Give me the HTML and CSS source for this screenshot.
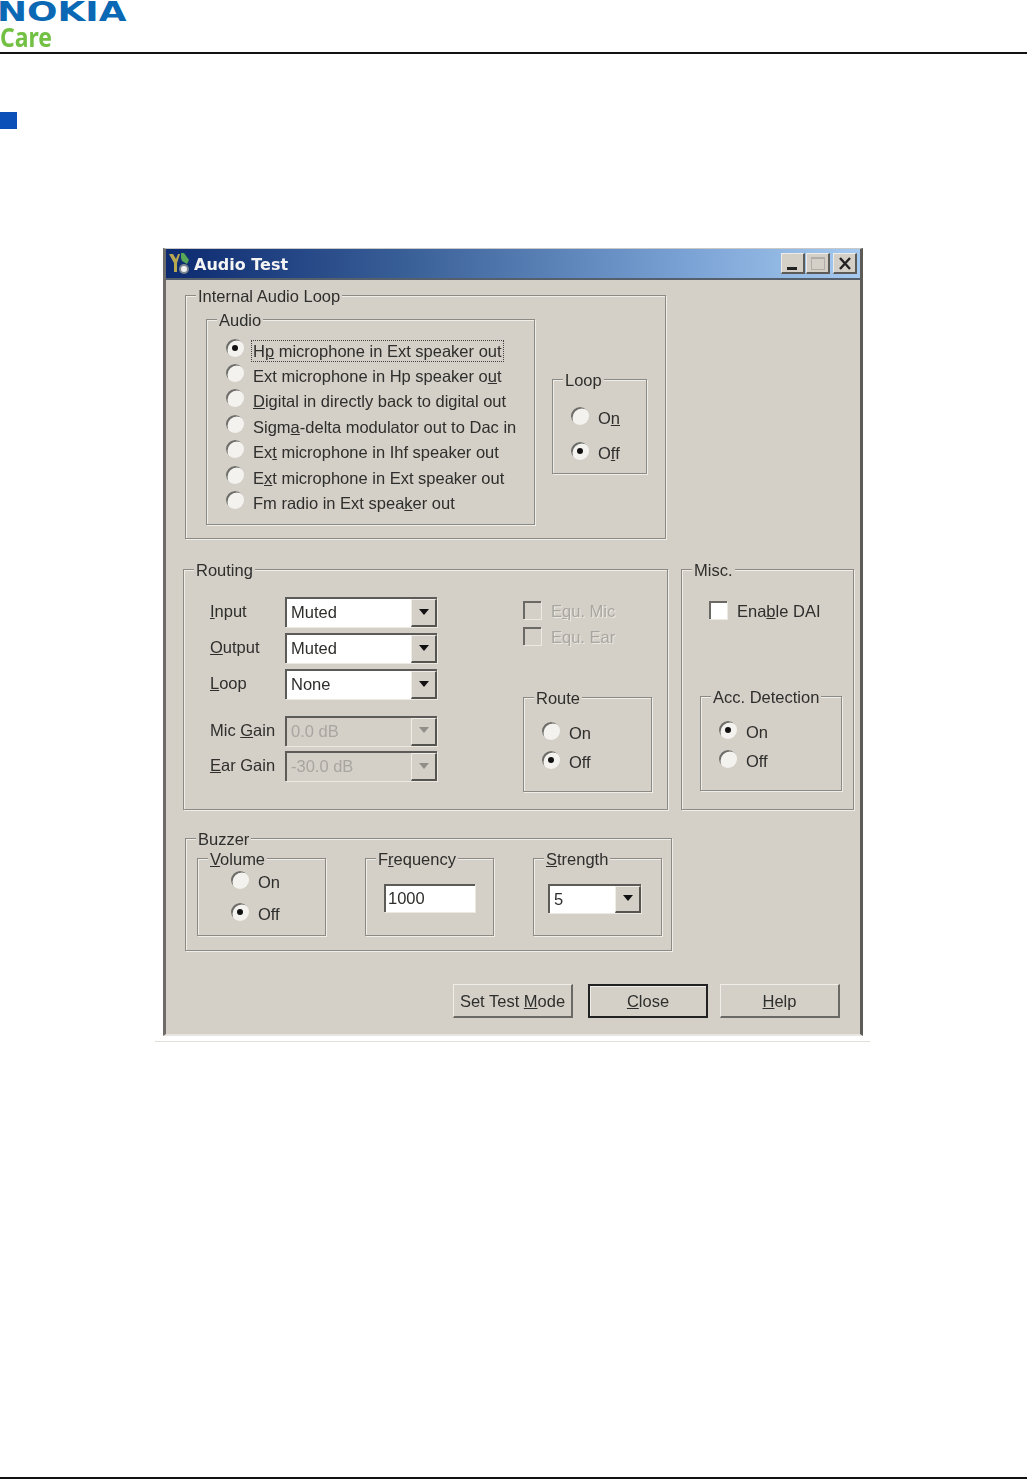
FILE: index.html
```html
<!DOCTYPE html>
<html lang="en">
<head>
<meta charset="utf-8">
<title>Audio Test</title>
<link rel="stylesheet" href="styles.css">
</head>
<body>
<header class="page-header">
  <div class="logo-nokia">NOKIA</div>
  <div class="logo-care">Care</div>
</header>
<div class="bullet"></div>
<figure class="figure">
  <div class="window">
    <div class="titlebar">
      <svg class="app-icon" width="23" height="23" viewBox="0 0 23 23">
        <path d="M1 2 L5 2 L8 7 L10 2 L12 2 L9 11 L9 20 L6 20 L6 11Z" fill="#b8a850"/>
        <path d="M13 1 L16 1 L21 8 L19 12 L14 9 L13 6Z" fill="#58a858"/>
        <circle cx="16" cy="17" r="5" fill="#7d8790"/>
        <circle cx="16" cy="17" r="3" fill="#f2f2f2"/>
      </svg>
      <span class="title-text">Audio Test</span>
      <div class="caption-buttons">
        <div class="cap-btn cap-min"><span class="min-glyph"></span></div>
        <div class="cap-btn cap-max"><span class="max-glyph"></span></div>
        <div class="cap-btn cap-close">
          <svg width="14" height="13" viewBox="0 0 14 13"><path d="M2 1 L12 12 M12 1 L2 12" stroke="#222" stroke-width="2.4"/></svg>
        </div>
      </div>
    </div>
    <div class="client">
      <section class="group g-internal">
        <span class="legend">Internal Audio Loop</span>
        <section class="group g-audio">
          <span class="legend">Audio</span>
          <div class="radio-row"><span class="radio checked"></span><span class="focus-label">H<u>p</u> microphone in Ext speaker out</span></div>
          <div class="radio-row"><span class="radio"></span><span>Ext microphone in Hp speaker o<u>u</u>t</span></div>
          <div class="radio-row"><span class="radio"></span><span><u>D</u>igital in directly back to digital out</span></div>
          <div class="radio-row"><span class="radio"></span><span>Sigm<u>a</u>-delta modulator out to Dac in</span></div>
          <div class="radio-row"><span class="radio"></span><span>Ex<u>t</u> microphone in Ihf speaker out</span></div>
          <div class="radio-row"><span class="radio"></span><span>E<u>x</u>t microphone in Ext speaker out</span></div>
          <div class="radio-row"><span class="radio"></span><span>Fm radio in Ext spea<u>k</u>er out</span></div>
        </section>
        <section class="group g-loop">
          <span class="legend">Loop</span>
          <div class="radio-row wide"><span class="radio"></span><span>O<u>n</u></span></div>
          <div class="radio-row wide"><span class="radio checked"></span><span>O<u>f</u>f</span></div>
        </section>
      </section>

      <div class="row-two">
        <section class="group g-routing">
          <span class="legend">Routing</span>
          <div class="routing-left">
            <div class="field"><label class="field-label"><u>I</u>nput</label><div class="combo"><span class="combo-value">Muted</span><span class="combo-btn"><i class="arrow"></i></span></div></div>
            <div class="field"><label class="field-label"><u>O</u>utput</label><div class="combo"><span class="combo-value">Muted</span><span class="combo-btn"><i class="arrow"></i></span></div></div>
            <div class="field"><label class="field-label"><u>L</u>oop</label><div class="combo"><span class="combo-value">None</span><span class="combo-btn"><i class="arrow"></i></span></div></div>
            <div class="field field-gap"><label class="field-label">Mic <u>G</u>ain</label><div class="combo disabled"><span class="combo-value">0.0 dB</span><span class="combo-btn"><i class="arrow"></i></span></div></div>
            <div class="field"><label class="field-label"><u>E</u>ar Gain</label><div class="combo disabled"><span class="combo-value">-30.0 dB</span><span class="combo-btn"><i class="arrow"></i></span></div></div>
          </div>
          <div class="routing-right">
            <div class="check-row disabled-text"><span class="check"></span><span>E<u>q</u>u. Mic</span></div>
            <div class="check-row disabled-text"><span class="check"></span><span>Equ. Ear</span></div>
            <section class="group g-route">
              <span class="legend">Route</span>
              <div class="radio-row compact"><span class="radio"></span><span>On</span></div>
              <div class="radio-row compact"><span class="radio checked"></span><span>Off</span></div>
            </section>
          </div>
        </section>
        <section class="group g-misc">
          <span class="legend">Misc.</span>
          <div class="check-row enable"><span class="check white"></span><span>Ena<u>b</u>le DAI</span></div>
          <section class="group g-acc">
            <span class="legend">Acc. Detection</span>
            <div class="radio-row compact"><span class="radio checked"></span><span>On</span></div>
            <div class="radio-row compact"><span class="radio"></span><span>Off</span></div>
          </section>
        </section>
      </div>

      <section class="group g-buzzer">
        <span class="legend">Buzzer</span>
        <section class="group g-small g-volume">
          <span class="legend"><u>V</u>olume</span>
          <div class="radio-row volume"><span class="radio"></span><span>On</span></div>
          <div class="radio-row volume"><span class="radio checked"></span><span>Off</span></div>
        </section>
        <section class="group g-small">
          <span class="legend">F<u>r</u>equency</span>
          <div class="textbox">1000</div>
        </section>
        <section class="group g-small g-strength">
          <span class="legend"><u>S</u>trength</span>
          <div class="combo small"><span class="combo-value">5</span><span class="combo-btn"><i class="arrow"></i></span></div>
        </section>
      </section>

      <div class="buttons">
        <div class="button"><span>Set Test <u>M</u>ode</span></div>
        <div class="button default"><span><u>C</u>lose</span></div>
        <div class="button"><span><u>H</u>elp</span></div>
      </div>
    </div>
  </div>
</figure>
<div class="footer-rule"></div>
</body>
</html>
```
FILE: styles.css
```css
* { box-sizing: border-box; }
html, body { margin: 0; height: 100%; }
body {
  position: relative;
  height: 1479px;
  overflow: hidden;
  background: #fff;
  font-family: "Liberation Sans", Arial, sans-serif;
  display: flex;
  flex-direction: column;
}

/* page chrome */
.page-header {
  height: 54px;
  border-bottom: 2px solid #111;
  flex: none;
}
.logo-nokia {
  font-family: "DejaVu Sans", sans-serif;
  font-weight: 700;
  font-size: 26px;
  line-height: 25px;
  height: 25px;
  width: 98px;
  color: #0a68b4;
  transform: translateX(-3px) scaleX(1.38);
  transform-origin: 0 0;
}
.logo-care {
  font-family: "Noto Sans", sans-serif;
  font-weight: 700;
  font-size: 27px;
  line-height: 26px;
  height: 26px;
  width: 64px;
  margin-top: -1px;
  color: #72c044;
  transform: scaleX(.85);
  transform-origin: 0 0;
}
.bullet {
  width: 17px;
  height: 17px;
  margin-top: 58px;
  background: #0a50b8;
  flex: none;
}
.figure {
  margin: 119px 0 0 155px;
  width: 715px;
  height: 794px;
  padding: 0 8px 0 8px;
  border-bottom: 1px solid #e2dfd8;
  flex: none;
}
.footer-rule {
  margin-top: auto;
  height: 2px;
  background: #111;
  flex: none;
}

/* dialog */
.window {
  width: 700px;
  height: 788px;
  background: #d4d0c8;
  border-left: 3px solid #6d6c68;
  border-right: 3px solid #5c5b58;
  border-top: 1px solid #c8c8c8;
  border-bottom: 2px solid #e8e6e0;
  color: #2e2e2c;
  font-size: 16.5px;
  line-height: 20px;
  filter: blur(.7px);
  display: flex;
  flex-direction: column;
}
.titlebar {
  height: 31px;
  flex: none;
  display: flex;
  align-items: center;
  padding: 0 3px 0 2px;
  background: linear-gradient(90deg, #0c2a70 0%, #3a6098 35%, #7aa2d4 75%, #a6caf0 100%);
  border-bottom: 2px solid #55606c;
  color: #f4f4f4;
}
.app-icon { flex: none; }
.title-text {
  font-family: "DejaVu Sans", sans-serif;
  font-weight: 700;
  font-size: 16px;
  margin: 2px 0 0 3px;
}
.caption-buttons {
  margin-left: auto;
  display: flex;
  gap: 1px;
}
.cap-btn {
  width: 24px;
  height: 21px;
  background: #d4d0c8;
  border-right: 2px solid #5c5b58;
  border-bottom: 2px solid #5c5b58;
  border-top: 1px solid #eeece6;
  border-left: 1px solid #eeece6;
  display: flex;
  align-items: center;
  justify-content: center;
}
.cap-max { margin-right: 2px; }
.min-glyph { width: 10px; height: 3px; background: #222; margin-top: 10px; margin-left: -1px; }
.max-glyph { width: 14px; height: 13px; border: 1px solid #b0aea8; border-top-width: 2px; }

.client {
  flex: 1;
  padding: 15px 0 0 19px;
  display: flex;
  flex-direction: column;
}

/* group boxes */
.group {
  position: relative;
  border: 1px solid #8c8a84;
  box-shadow: inset 1px 1px 0 #f0eee8, 1px 1px 0 #f0eee8;
}
.legend {
  position: absolute;
  top: -9px;
  left: 10px;
  padding: 0 2px;
  line-height: 18px;
  background: #d4d0c8;
  white-space: nowrap;
}
.g-internal {
  width: 481px;
  height: 244px;
  display: flex;
  align-items: flex-start;
  padding: 23px 0 0 20px;
  gap: 17px;
}
.g-audio {
  width: 329px;
  height: 206px;
  padding: 17px 0 0 19px;
}
.g-loop {
  width: 95px;
  height: 95px;
  margin-top: 60px;
  padding: 20px 0 0 18px;
}
.row-two {
  display: flex;
  gap: 13px;
  margin: 30px 0 0 -2px;
}
.g-routing {
  width: 485px;
  height: 241px;
  display: flex;
  padding: 24px 0 0 26px;
}
.routing-left { width: 313px; flex: none; }
.routing-right { flex: 1; padding-top: 3px; }
.g-misc {
  width: 173px;
  height: 241px;
  padding: 27px 0 0 18px;
}
.g-route {
  width: 129px;
  height: 95px;
  margin-top: 48px;
  padding: 20px 0 0 18px;
}
.g-acc {
  width: 142px;
  height: 95px;
  margin-top: 73px;
  padding: 20px 0 0 18px;
}
.g-buzzer {
  width: 487px;
  height: 113px;
  margin-top: 28px;
  display: flex;
  gap: 39px;
  padding: 19px 0 0 11px;
}
.g-small {
  width: 129px;
  height: 78px;
  padding: 25px 0 0 18px;
}
.g-volume { padding: 7px 0 0 33px; }
.g-strength { padding-left: 14px; }

/* radios */
.radio-row {
  display: flex;
  align-items: center;
  height: 25.4px;
  gap: 9px;
  white-space: nowrap;
}
.radio-row > span:last-child { margin-top: 2px; }
.radio-row.wide,
.radio-row.compact,
.radio-row.volume { gap: 9px; }
.radio-row.wide > span:last-child,
.radio-row.compact > span:last-child,
.radio-row.volume > span:last-child { margin-top: 0; }
.radio-row.wide { height: 35px; }
.radio-row.compact { height: 29.5px; }
.radio-row.volume { height: 32px; }
.radio {
  position: relative;
  width: 18px;
  height: 18px;
  flex: none;
  margin-top: -4px;
  border-radius: 50%;
  background: #f3f2ee;
  box-shadow: inset 2px 2px 0 -0.5px #6e6d69;
}
.radio.checked::after {
  content: "";
  position: absolute;
  left: 6px;
  top: 6px;
  width: 6px;
  height: 6px;
  border-radius: 50%;
  background: #111;
}
.focus-label {
  outline: 1px dotted #444;
  padding: 0 1px;
  margin-left: -1px;
}

/* routing */
.field {
  display: flex;
  align-items: center;
  height: 36px;
}
.field-gap { margin-top: 11px; height: 35px; }
.field-label { width: 75px; flex: none; margin-top: -2px; }
.combo {
  width: 152px;
  height: 30px;
  flex: none;
  display: flex;
  background: #fff;
  border-top: 2px solid #5c5b58;
  border-left: 2px solid #5c5b58;
  box-shadow: 1px 1px 0 #ece9e3;
}
.combo-value { flex: 1; padding: 3px 0 0 4px; }
.combo-btn {
  width: 26px;
  display: flex;
  align-items: center;
  justify-content: center;
  background: #d4d0c8;
  border-top: 1px solid #efede8;
  border-left: 1px solid #efede8;
  border-right: 2px solid #55544f;
  border-bottom: 2px solid #55544f;
}
.arrow {
  width: 0;
  height: 0;
  margin-top: -2px;
  border-left: 5px solid transparent;
  border-right: 5px solid transparent;
  border-top: 6px solid #111;
}
.combo.disabled { background: #d4d0c8; color: #a8a6a0; }
.combo.disabled .arrow { border-top-color: #908e88; }
.combo.small { width: 93px; height: 29px; }
.combo.small .combo-value { padding-top: 3px; }

/* check boxes */
.check-row {
  display: flex;
  align-items: center;
  gap: 10px;
  height: 26px;
  white-space: nowrap;
}
.check-row > span:last-child { margin-top: 2px; }
.disabled-text { color: #a8a6a0; text-shadow: 1px 1px 0 #ece9e3; }
.check {
  width: 18px;
  height: 18px;
  flex: none;
  background: #d4d0c8;
  border-top: 2px solid #6a6964;
  border-left: 2px solid #6a6964;
  box-shadow: 1px 1px 0 #ece9e3;
}
.check.white { background: #fff; }
.enable { margin-left: 9px; }

/* text box */
.textbox {
  width: 91px;
  height: 28px;
  background: #fff;
  border-top: 2px solid #5c5b58;
  border-left: 2px solid #5c5b58;
  box-shadow: 1px 1px 0 #ece9e3;
  padding: 2px 0 0 2px;
}

/* buttons */
.buttons {
  display: flex;
  gap: 12px;
  margin: 33px 0 0 268px;
}
.button {
  width: 120px;
  height: 34px;
  display: flex;
  align-items: center;
  justify-content: center;
  white-space: nowrap;
  background: #d4d0c8;
  border-top: 1px solid #f0eee8;
  border-left: 1px solid #f0eee8;
  border-right: 2px solid #6a6964;
  border-bottom: 2px solid #6a6964;
}
.button.default {
  margin-left: 3px;
  border: 2px solid #222;
  box-shadow: inset 1px 1px 0 #f0eee8;
}
```
